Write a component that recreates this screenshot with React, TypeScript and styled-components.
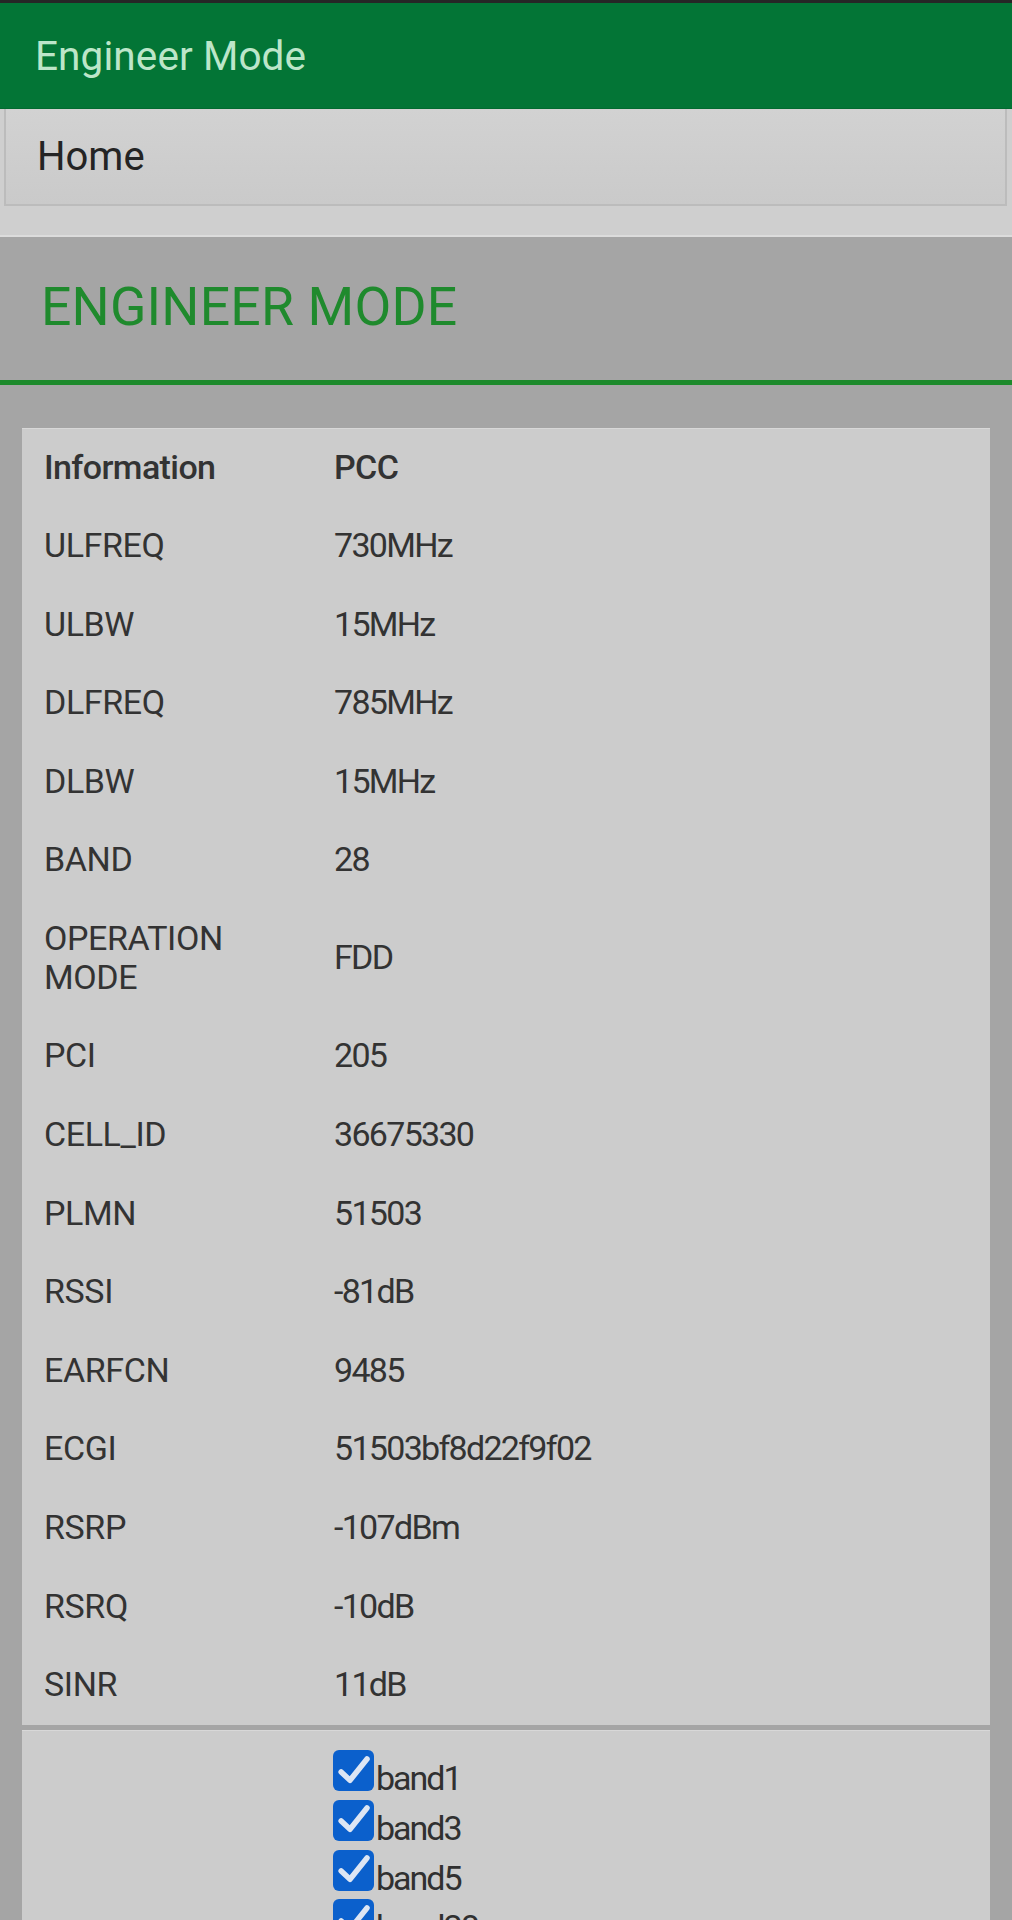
import React from "react";
import styled, { createGlobalStyle } from "styled-components";

const GlobalStyle = createGlobalStyle`
  html, body {
    margin: 0;
    padding: 0;
    background: #a5a5a5;
    font-family: Roboto, "Liberation Sans", Arial, sans-serif;
  }
  * { box-sizing: border-box; }
`;

const Page = styled.div`
  display: flex;
  flex-direction: column;
  min-height: 1920px;
  background: #a5a5a5;
`;

const TopStrip = styled.div`
  height: 3px;
  background: #262626;
`;

const AppBar = styled.header`
  height: 106px;
  background: #037536;
  border-bottom: 1px solid #026a30;
  display: flex;
  align-items: center;
  padding-left: 35px;
`;

const AppTitle = styled.h1`
  margin: 0;
  font-size: 40.5px;
  font-weight: 400;
  color: #bce6c9;
  letter-spacing: 0.1px;
`;

const NavWrap = styled.nav`
  background: #cfcfcf;
  padding: 0 5px 29px 4px;
  border-bottom: 2px solid #dcdcdc;
`;

const NavItem = styled.div`
  height: 97px;
  display: flex;
  align-items: center;
  padding-left: 31px;
  background: linear-gradient(#d2d2d2, #cacaca);
  border-style: solid;
  border-color: #bcbcbc;
  border-width: 0 2px 2px 2px;
  font-size: 40px;
  color: #242424;
`;

const Main = styled.main`
  background: #a5a5a5;
  display: flex;
  flex-direction: column;
`;

const SectionHead = styled.div`
  height: 148px;
  display: flex;
  align-items: center;
  padding: 0 0 5px 41px;
  border-bottom: 5px solid #1d8a2c;
`;

const SectionTitle = styled.h2`
  margin: 0;
  font-size: 53.5px;
  font-weight: 400;
  color: #1f8a2d;
  letter-spacing: 0.2px;
`;

const Cards = styled.div`
  display: flex;
  flex-direction: column;
  gap: 5px;
  margin: 43px 22px 0 22px;
`;

const Card = styled.section`
  background: #cccccc;
  border-top: 1px solid #d8d8d8;
`;

const Row = styled.div`
  display: grid;
  grid-template-columns: 312px 1fr;
  font-size: 34px;
  line-height: 38.7px;
  color: #333333;
`;

const Label = styled.div<{ $head?: boolean }>`
  padding: 18.5px 40px 21.4px 22px;
  font-weight: ${(p) => (p.$head ? 500 : 400)};
  letter-spacing: ${(p) => (p.$head ? "-0.6px" : "-0.4px")};
`;

const Value = styled.div<{ $head?: boolean }>`
  padding: 18.5px 0 21.4px 0;
  display: flex;
  align-items: center;
  font-weight: ${(p) => (p.$head ? 500 : 400)};
  letter-spacing: ${(p) => (p.$head ? "-0.6px" : "-1.7px")};
`;

const BandList = styled.div`
  display: flex;
  flex-direction: column;
  gap: 9.7px;
  padding-top: 20px;
`;

const BandItem = styled.label`
  display: flex;
  align-items: flex-end;
  height: 40px;
  font-size: 34px;
  line-height: 34px;
  color: #303030;
`;

const CheckBox = styled.span`
  width: 41px;
  height: 41px;
  border-radius: 6px;
  background: #0b60cc;
  display: flex;
  align-items: center;
  justify-content: center;
  flex: none;
  margin-left: -1px;
  margin-right: 2px;
`;

const BandText = styled.span`
  margin-bottom: -4px;
  letter-spacing: -2px;
`;

const rows: [string, string][] = [
  ["ULFREQ", "730MHz"],
  ["ULBW", "15MHz"],
  ["DLFREQ", "785MHz"],
  ["DLBW", "15MHz"],
  ["BAND", "28"],
  ["OPERATION MODE", "FDD"],
  ["PCI", "205"],
  ["CELL_ID", "36675330"],
  ["PLMN", "51503"],
  ["RSSI", "-81dB"],
  ["EARFCN", "9485"],
  ["ECGI", "51503bf8d22f9f02"],
  ["RSRP", "-107dBm"],
  ["RSRQ", "-10dB"],
  ["SINR", "11dB"],
];

const bands = ["band1", "band3", "band5", "band28", "band40"];

const Check = () => (
  <svg width="40" height="40" viewBox="0 0 24 24" fill="none">
    <path
      d="M4.3 12.6 L9.6 17.6 L19.8 4.8"
      stroke="#dde6f4"
      strokeWidth="3.3"
      strokeLinecap="round"
      strokeLinejoin="round"
    />
  </svg>
);

export default function App() {
  return (
    <Page>
      <GlobalStyle />
      <TopStrip />
      <AppBar>
        <AppTitle>Engineer Mode</AppTitle>
      </AppBar>
      <NavWrap>
        <NavItem>Home</NavItem>
      </NavWrap>
      <Main>
        <SectionHead>
          <SectionTitle>ENGINEER MODE</SectionTitle>
        </SectionHead>
        <Cards>
          <Card>
            <Row>
              <Label $head>Information</Label>
              <Value $head>PCC</Value>
            </Row>
            {rows.map(([k, v]) => (
              <Row key={k}>
                <Label>{k}</Label>
                <Value>{v}</Value>
              </Row>
            ))}
          </Card>
          <Card>
            <Row>
              <Label />
              <BandList>
                {bands.map((b) => (
                  <BandItem key={b}>
                    <CheckBox>
                      <Check />
                    </CheckBox>
                    <BandText>{b}</BandText>
                  </BandItem>
                ))}
              </BandList>
            </Row>
          </Card>
        </Cards>
      </Main>
    </Page>
  );
}
